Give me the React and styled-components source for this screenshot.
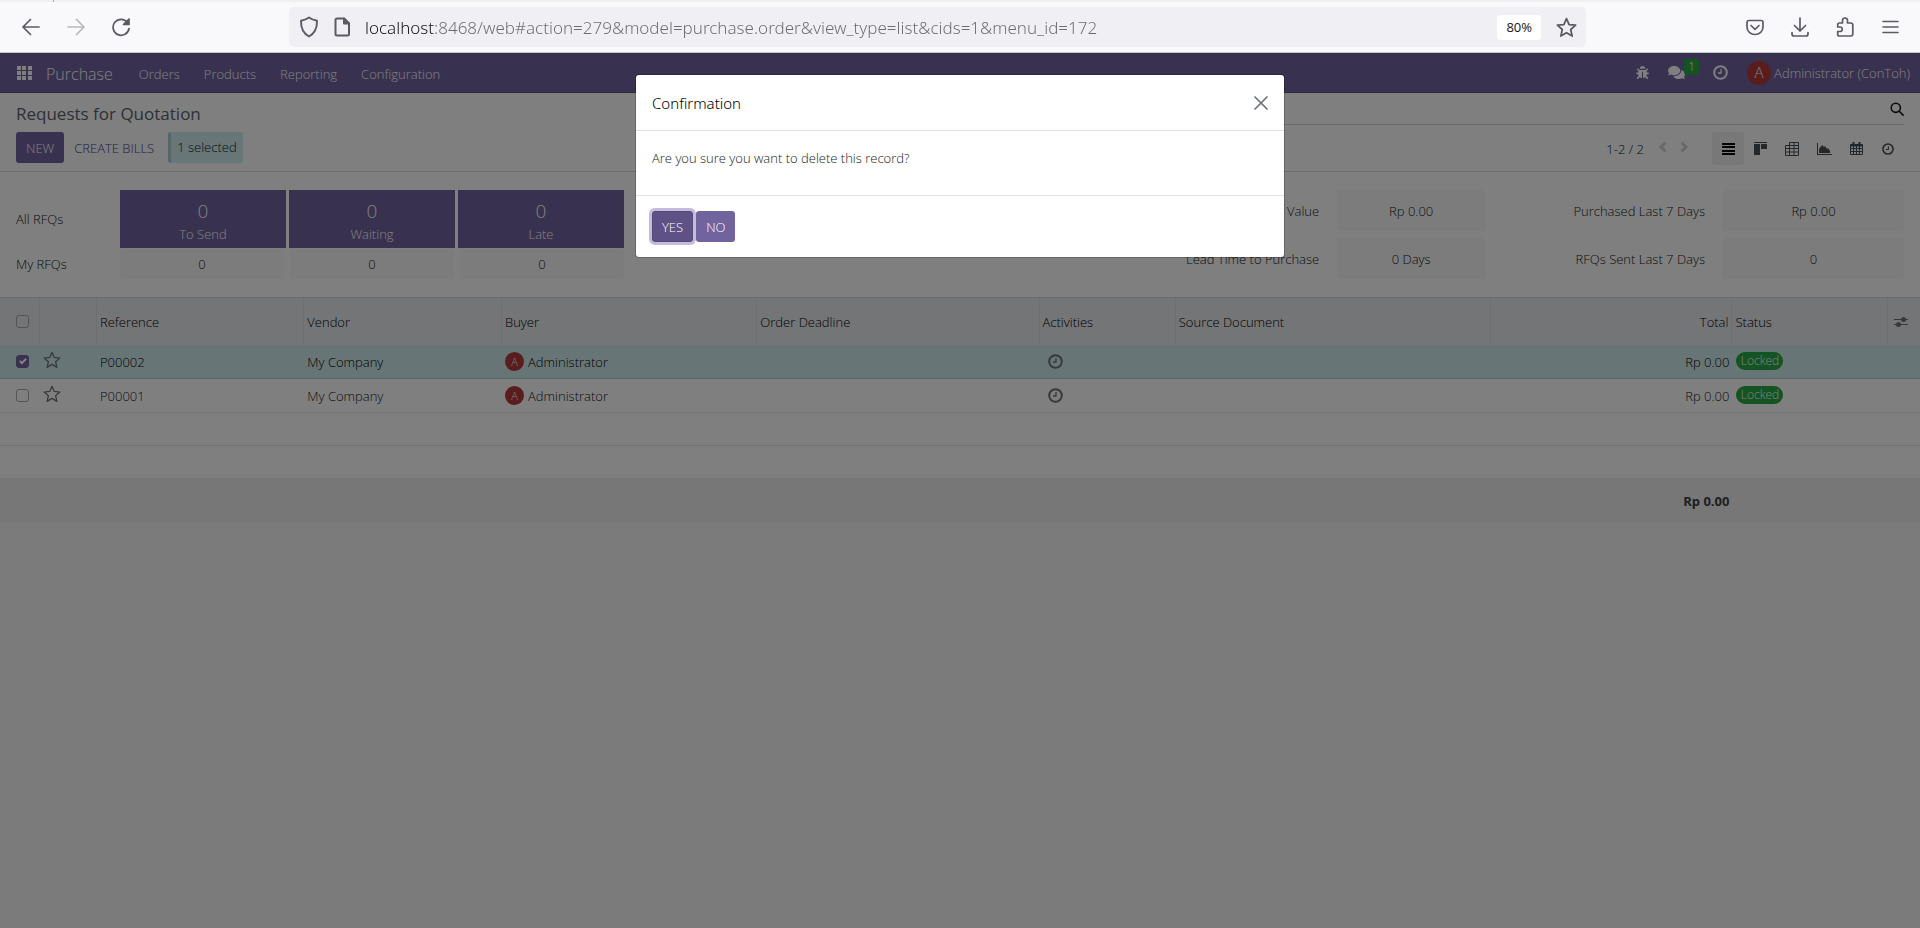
import React from "react";
import styled, { createGlobalStyle, css } from "styled-components";
import { FaBug, FaComments } from "react-icons/fa";

const GlobalStyle = createGlobalStyle`
  *, *::before, *::after { box-sizing: border-box; }
  body {
    margin: 0;
    color: #15181c;
    background: #f7f7f7;
    font: 300 13px/20px "Open Sans", "Noto Sans", sans-serif;
  }
  button, input { font: inherit; color: inherit; }
  button { border: 0; padding: 0; background: none; cursor: pointer; }
  svg { display: block; flex: none; }
`;

const Window = styled.div`
  display: flex;
  flex-direction: column;
  min-height: 100vh;
`;

/* ---------- browser chrome ---------- */

const TabStrip = styled.div`
  height: 2px;
  background: #f0f0f2;
`;

const TabEdge = styled.div`
  width: 54px;
  height: 2px;
  border-right: 1px solid #a9a9ad;
`;

const BrowserBar = styled.header`
  display: flex;
  align-items: center;
  height: 51px;
  padding: 0 8px;
  background: #f9f9fb;
  border-bottom: 1px solid #c3cbc6;
  color: #5b5b66;
`;

const ChromeButton = styled.button`
  display: flex;
  align-items: center;
  justify-content: center;
  width: 45px;
  height: 32px;
  opacity: ${(p) => (p.disabled ? 0.4 : 1)};
`;

const UrlBar = styled.div`
  display: flex;
  flex: 1;
  align-items: center;
  height: 40px;
  margin: 0 146px;
  padding: 0 9px 0 10px;
  gap: 15px;
  border-radius: 5px;
  background: #f0f0f4;
`;

const UrlInput = styled.input`
  flex: 1;
  min-width: 0;
  height: 32px;
  padding: 1px 0 0;
  border: 0;
  outline: 0;
  font-family: "Noto Sans", sans-serif;
  font-size: 17px;
  color: transparent;
  background: linear-gradient(90deg, #15141a 70px, #6b6b71 70px);
  background-clip: text;
  -webkit-background-clip: text;
`;

const ZoomLevel = styled.button`
  height: 25px;
  padding: 0 9px;
  border-radius: 4px;
  background: #fff;
  color: #15141a;
  font-weight: 400;
`;

/* ---------- application ---------- */

const Page = styled.div`
  position: relative;
  flex: 1;
`;

const Navbar = styled.nav`
  display: flex;
  align-items: center;
  height: 40px;
  padding: 0 10px 0 17px;
  background: #71639e;
  border-bottom: 1px solid #5a4f7f;
  color: #fff;
`;

const Brand = styled.a`
  padding: 2px 14px 0;
  font-size: 16px;
  color: inherit;
  text-decoration: none;
`;

const NavLink = styled.a`
  padding: 2px 12px 0;
  color: inherit;
  text-decoration: none;
`;

const Systray = styled.div`
  display: flex;
  align-items: center;
  margin-left: auto;
`;

const TrayButton = styled.button`
  position: relative;
  display: flex;
  align-items: center;
  margin-right: ${(p) => (p.$counted ? 28 : 19)}px;
`;

const Counter = styled.span`
  position: absolute;
  left: 16px;
  top: -5px;
  width: 15px;
  height: 16px;
  border-radius: 3px;
  background: #28a745;
  font-size: 12px;
  line-height: 16px;
  text-align: center;
`;

const Avatar = styled.span`
  display: flex;
  align-items: center;
  justify-content: center;
  flex: none;
  width: ${(p) => (p.$large ? 24 : 19)}px;
  height: ${(p) => (p.$large ? 24 : 19)}px;
  border-radius: 50%;
  background: #b33a3c;
  color: #fff;
  font-size: ${(p) => (p.$large ? 15 : 11)}px;
  line-height: 1;
`;

const UserButton = styled.button`
  display: flex;
  align-items: center;
  gap: 3px;
`;

const ControlPanel = styled.section`
  display: grid;
  grid-template-columns: 1fr 1fr;
  padding: 0 16px 6px;
  background: #fff;
  border-bottom: 1px solid #d9dbde;
`;

const Title = styled.h1`
  margin: 9px 0 6px;
  color: #5c6269;
  font-size: 17px;
  font-weight: 400;
  line-height: 24px;
`;

const Actions = styled.div`
  display: flex;
  align-items: center;
`;

const Button = styled.button`
  height: 31px;
  padding: 0 10px;
  border-radius: 3px;
  text-transform: uppercase;
  ${(p) =>
    p.$link
      ? css`
          color: #46378a;
        `
      : css`
          background: ${p.$active ? "#5e5185" : "#71639e"};
          color: #fff;
        `}
  ${(p) =>
    p.$active &&
    css`
      border: 1px solid #564a79;
      padding: 0 9px;
      box-shadow: 0 0 0 3px #c4bcd9;
      outline: 0;
    `}
`;

const Selected = styled.span`
  height: 31px;
  margin-left: 4px;
  padding: 0 6px;
  border-left: 3px solid #a6cfd4;
  border-radius: 3px;
  background: #d1ecee;
  color: #002a33;
  line-height: 31px;
`;

const SearchRow = styled.div`
  display: flex;
  align-items: center;
  height: 32px;
  border-bottom: 1px solid #d3d5d8;
`;

const SearchInput = styled.input`
  flex: 1;
  min-width: 0;
  border: 0;
  outline: 0;
  background: none;
`;

const ViewRow = styled.div`
  display: flex;
  align-items: center;
  justify-content: flex-end;
  margin-top: 7px;
`;

const PagerButton = styled.button`
  width: 21px;
  color: #d0d3d7;
  svg { margin: 0 auto 4px; }
`;

const Pager = styled.div`
  display: flex;
  align-items: center;
  margin-right: 18px;
  span { margin-right: 8px; }
`;

const ViewButton = styled.button`
  display: flex;
  align-items: center;
  justify-content: center;
  width: 32px;
  height: 33px;
  border-radius: 3px;
  color: ${(p) => (p.$on ? "#000" : "#495057")};
  background: ${(p) => (p.$on ? "#f1f1f2" : "none")};
`;

const Dashboard = styled.section`
  display: flex;
  justify-content: space-between;
  padding: 18px 16px;
  background: #fff;
`;

const Summary = styled.div`
  display: grid;
  flex: 0 1 608px;
  gap: 1px;
`;

const SummaryRow = styled.div`
  display: flex;
  align-items: center;
`;

const SummaryLabel = styled.span`
  flex: 0 0 104px;
`;

const SummaryCells = styled.div`
  display: grid;
  flex: 1;
  grid-template-columns: repeat(3, 1fr);
  gap: ${(p) => p.$gap}px;
`;

const Tile = styled.a`
  display: flex;
  flex-direction: column;
  align-items: center;
  height: 58px;
  padding-top: 8px;
  background: #71639e;
  color: #fff;
  text-decoration: none;
  strong { font-size: 19px; font-weight: 300; line-height: 26px; }
`;

const Figure = styled.a`
  display: flex;
  align-items: center;
  justify-content: center;
  height: ${(p) => (p.$tall ? 41 : 30)}px;
  border-radius: 3px;
  background: #f8f8f8;
  color: inherit;
  text-decoration: none;
`;

const Metrics = styled.div`
  display: grid;
  flex: 0 1 718px;
  grid-template-columns: auto 148px 1fr 181px;
  gap: 7px 18px;
  align-items: center;
  text-align: right;
`;

const List = styled.table`
  width: 100%;
  table-layout: fixed;
  border-spacing: 0;
  background: #fff;
  th { font-weight: 300; text-align: left; color: #000; }
  td, th { padding: 0 3px; white-space: nowrap; }
  td:first-child, th:first-child { padding-left: 16px; }
  td { border-bottom: 1px solid #e4e6e9; }
`;

const Col = styled.col`
  width: ${(p) => p.$w};
`;

const HeadCell = styled.th`
  height: 48px;
  border-top: 1px solid #d9dbde;
  border-right: 1px solid #dddfe2;
  background: #e9eaec;
  && { text-align: ${(p) => (p.$right ? "right" : "left")}; }
  &:last-child { border-right: 0; padding-left: 6px; }
`;

const Row = styled.tr`
  height: ${(p) => (p.$empty ? 33 : 34)}px;
  ${(p) =>
    p.$selected &&
    css`
      background: #d1ebec;
      color: #000;
      && td { border-bottom-color: #b9cfd1; }
    `}
`;

const FootRow = styled.tr`
  height: 44px;
  background: #eeeeee;
  color: #3a3f46;
  td { border: 0; font-weight: 700; }
`;

const NumberCell = styled.td`
  text-align: right;
`;

const Person = styled.span`
  display: flex;
  align-items: center;
  gap: 4px;
`;

const Check = styled.input.attrs({ type: "checkbox" })`
  display: block;
  appearance: none;
  width: 13px;
  height: 13px;
  margin: 0;
  border: 1px solid #a5a8ac;
  border-radius: 3px;
  &:checked { background: #71639e; border-color: #71639e; }
  &:checked::after {
    content: "";
    display: block;
    width: 4px;
    height: 7px;
    margin: 1px 0 0 4px;
    border: solid #fff;
    border-width: 0 2px 2px 0;
    transform: rotate(45deg);
  }
`;

const IconButton = styled.button`
  display: block;
  color: #6c7178;
`;

const StarButton = styled(IconButton)`
  margin-bottom: 3px;
`;

const ActivityButton = styled(IconButton)`
  margin-left: 5px;
`;

const Badge = styled.span`
  display: block;
  width: 47px;
  height: 18px;
  margin: 0 1px 2px;
  border-radius: 9px;
  background: #28a745;
  color: #fff;
  font-size: 12px;
  line-height: 18px;
  text-align: center;
`;

/* ---------- dialog ---------- */

const Backdrop = styled.div`
  position: absolute;
  inset: 0;
  display: flex;
  justify-content: center;
  align-items: flex-start;
  padding-top: 22px;
  background: rgba(0, 0, 0, 0.5);
`;

const Dialog = styled.section`
  width: 648px;
  max-width: 90%;
  border-radius: 3px;
  background: #fff;
  box-shadow: 0 0 0 1px rgba(0, 0, 0, 0.2);
`;

const DialogHeader = styled.header`
  display: flex;
  align-items: center;
  justify-content: space-between;
  height: 56px;
  padding: 0 16px;
  border-bottom: 1px solid #dee2e6;
  color: #000;
`;

const DialogTitle = styled.h2`
  margin: 0;
  font-family: "Noto Sans", sans-serif;
  font-size: 15px;
  font-weight: 300;
`;

const DialogBody = styled.p`
  margin: 0;
  padding: 17px 16px 27px;
`;

const DialogFooter = styled.footer`
  display: flex;
  gap: 3px;
  padding: 15px 16px;
  border-top: 1px solid #dee2e6;
`;

/* ---------- drawings ---------- */

const Line = ({ w, h, box, sw = 2, children }) => (
  <svg width={w} height={h} viewBox={box || `0 0 ${w} ${h}`} fill="none" stroke="currentColor"
    strokeWidth={sw} strokeLinecap="round" strokeLinejoin="round" aria-hidden="true">
    {children}
  </svg>
);

const Fill = ({ w, h, children }) => (
  <svg width={w} height={h} viewBox={`0 0 ${w} ${h}`} fill="currentColor" aria-hidden="true">
    {children}
  </svg>
);

const Back = () => <Line w={18} h={18} sw={1.7}><path d="M17 9H1.5M8.5 1.5 1 9l7.5 7.5" /></Line>;
const Forward = () => <Line w={18} h={18} sw={1.7}><path d="M1 9h15.500M9.500 1.500 17 9l-7.500 7.500" /></Line>;
const Reload = () => (
  <Line w={20} h={20} sw={1.7}>
    <path d="M16.500 5.500A8 8 0 1 0 18 11.500" />
    <path d="M18 2v5.500h-5.500z" fill="currentColor" />
  </Line>
);
const Shield = () => <Line w={20} h={22} sw={1.9}><path d="M10 1.500c2.500 1.800 5 2.800 8 3.300.200 7-2 12.500-8 15.700C4 17.300 1.800 11.800 2 4.800c3-.500 5.500-1.500 8-3.300z" /></Line>;
const Doc = () => (
  <Line w={16} h={20} sw={2}>
    <path d="M3 1.500h7l5 5V17a1.500 1.500 0 0 1-1.500 1.500H3A1.500 1.500 0 0 1 1.500 17V3A1.500 1.500 0 0 1 3 1.500z" />
    <path d="M10 1.500v5h5z" fill="currentColor" />
  </Line>
);
const Star = ({ size, sw }) => (
  <Line w={size} h={size} box="0 0 20 20" sw={sw}>
    <path d="m10 1.500 2.500 5.700 6.200.6-4.700 4.100 1.400 6.300-5.400-3.300-5.400 3.300L6 11.900 1.300 7.800l6.200-.6z" />
  </Line>
);
const Pocket = () => <Line w={18} h={17} sw={1.700}><path d="M3 1.500h12A1.800 1.800 0 0 1 17 3.300V8A8 7.500 0 0 1 1 8V3.300A1.800 1.800 0 0 1 3 1.500zM5 6.500l4 3.800 4-3.800" /></Line>;
const Download = () => <Line w={18} h={20} sw={1.700}><path d="M9 1v13M3.500 8.500 9 14l5.500-5.500M1 15.500v1.500a2 2 0 0 0 2 2h12a2 2 0 0 0 2-2v-1.500" /></Line>;
const Puzzle = () => <Line w={18} h={20} sw={1.700}><path d="M6.500 6V3.500a2.500 2.500 0 0 1 5 0V6H15a1.800 1.800 0 0 1 1.800 1.800v9.400A1.800 1.800 0 0 1 15 19H3.500a1.800 1.800 0 0 1-1.800-1.800V14.500H4a2.200 2.200 0 0 0 0-4.500H1.700V7.800A1.800 1.800 0 0 1 3.500 6z" /></Line>;
const Burger = () => <Line w={18} h={14} sw={1.600}><path d="M2 1.500h15M2 7h15M2 12.500h15" /></Line>;
const Apps = () => (
  <Fill w={15} h={14}>
    {[0, 5, 10].flatMap((y) => [0, 5, 11].map((x) => <rect key={`${x}-${y}`} x={x} y={y} width="4" height="4" />))}
  </Fill>
);
const Clock = ({ size = 15 }) => (
  <svg width={size} height={size} viewBox="0 0 15 15" fill="none" stroke="currentColor" aria-hidden="true">
    <circle cx="7.500" cy="7.500" r="6.300" strokeWidth="2" />
    <path d="M8 4v4H5" strokeWidth="1.300" />
  </svg>
);
const Magnifier = () => <Line w={14} h={14} sw={1.600}><circle cx="5.800" cy="5.800" r="4.600" /><path d="m9.300 9.300 3.800 3.800" /></Line>;
const Chevron = ({ right }) => <Line w={10} h={12} sw={3}><path d={right ? "m2.500 1.500 4.500 4.500-4.500 4.500" : "M7.500 1.500 3 6l4.500 4.500"} strokeLinecap="butt" strokeLinejoin="miter" /></Line>;
const ListIcon = () => <Fill w={13} h={12}><path d="M0 0h13v2H0zM0 3h13v2H0zM0 7h13v2H0zM0 10h13v2H0z" /></Fill>;
const Kanban = () => <Fill w={13} h={13}><path d="M0 0h13v1H0zM0 2h6v11H0zM7 2h6v5H7z" /></Fill>;
const Pivot = () => (
  <svg width="14" height="14" viewBox="0 0 14 14" fill="none" stroke="currentColor" aria-hidden="true">
    <path d="M4.500 3.500v-3h9v13H.5v-10h13M.5 6.500h13M.5 10h13M4.500 3.500v10M9 .5v13" />
  </svg>
);
const Graph = () => <Fill w={15} h={12}><path d="M0 0h1v11h14v1H0zM2 10V6l3-4 2 2 1-1 2 3 1-1 2 3v2z" /></Fill>;
const Calendar = () => (
  <svg width="13" height="13" viewBox="0 0 13 13" fill="none" stroke="currentColor" aria-hidden="true">
    <path d="M.5 2.500h12v10H.5zM.5 6.500h12M.5 9.500h12M3.500 4v8.500M6.500 4v8.500M9.500 4v8.500" />
    <path d="M0 3.500h13M3.500 0v4M9.500 0v4" strokeWidth="2" />
  </svg>
);
const Sliders = () => (
  <Fill w={14} h={12}>
    <path d="M0 3h14v1H0zM0 8h14v1H0z" />
    <circle cx="9.500" cy="3.500" r="2.500" />
    <circle cx="4.500" cy="8.500" r="2.500" />
  </Fill>
);
const Close = () => <Line w={14} h={14} sw={1.700}><path d="m1 1 12 12M13 1 1 13" /></Line>;

/* ---------- data ---------- */

const menus = ["Orders", "Products", "Reporting", "Configuration"];
const tiles = ["To Send", "Waiting", "Late"];
const views = [
  ["List", ListIcon], ["Kanban", Kanban], ["Pivot", Pivot],
  ["Graph", Graph], ["Calendar", Calendar], ["Activity", () => <Clock size={12} />],
];
const columns = [
  ["10.8%", "Reference"], ["10.3%", "Vendor"], ["13.3%", "Buyer"], ["14.7%", "Order Deadline"],
  ["7.1%", "Activities"], ["16.4%", "Source Document"], ["12.6%", "Total"], ["8.1%", "Status"],
];
const orders = [
  { ref: "P00002", selected: true },
  { ref: "P00001", selected: false },
];

export default function App() {
  return (
    <Window>
      <GlobalStyle />
      <TabStrip><TabEdge /></TabStrip>
      <BrowserBar>
        <ChromeButton aria-label="Back"><Back /></ChromeButton>
        <ChromeButton aria-label="Forward" disabled><Forward /></ChromeButton>
        <ChromeButton aria-label="Reload"><Reload /></ChromeButton>
        <UrlBar>
          <Shield />
          <Doc />
          <UrlInput
            aria-label="Address"
            defaultValue="localhost:8468/web#action=279&model=purchase.order&view_type=list&cids=1&menu_id=172"
          />
          <ZoomLevel>80%</ZoomLevel>
          <Star size={21} sw={1.7} />
        </UrlBar>
        <ChromeButton aria-label="Pocket"><Pocket /></ChromeButton>
        <ChromeButton aria-label="Downloads"><Download /></ChromeButton>
        <ChromeButton aria-label="Extensions"><Puzzle /></ChromeButton>
        <ChromeButton aria-label="Menu"><Burger /></ChromeButton>
      </BrowserBar>

      <Page>
        <Navbar>
          <Apps />
          <Brand href="#purchase">Purchase</Brand>
          {menus.map((m) => <NavLink key={m} href={`#${m}`}>{m}</NavLink>)}
          <Systray>
            <TrayButton aria-label="Debug"><FaBug size={13} /></TrayButton>
            <TrayButton aria-label="Messages" $counted>
              <FaComments size={17} />
              <Counter>1</Counter>
            </TrayButton>
            <TrayButton aria-label="Activities"><Clock /></TrayButton>
            <UserButton><Avatar $large>A</Avatar>Administrator (ConToh)</UserButton>
          </Systray>
        </Navbar>

        <ControlPanel>
          <div>
            <Title>Requests for Quotation</Title>
            <Actions>
              <Button>New</Button>
              <Button $link>Create Bills</Button>
              <Selected>1 selected</Selected>
            </Actions>
          </div>
          <div>
            <SearchRow>
              <SearchInput aria-label="Search" />
              <Magnifier />
            </SearchRow>
            <ViewRow>
              <Pager>
                <span>1-2 / 2</span>
                <PagerButton aria-label="Previous"><Chevron /></PagerButton>
                <PagerButton aria-label="Next"><Chevron right /></PagerButton>
              </Pager>
              {views.map(([name, Icon], i) => (
                <ViewButton key={name} aria-label={name} $on={i === 0}><Icon /></ViewButton>
              ))}
            </ViewRow>
          </div>
        </ControlPanel>

        <Dashboard>
          <Summary>
            <SummaryRow>
              <SummaryLabel>All RFQs</SummaryLabel>
              <SummaryCells $gap={3}>
                {tiles.map((t) => <Tile key={t} href="#all"><strong>0</strong>{t}</Tile>)}
              </SummaryCells>
            </SummaryRow>
            <SummaryRow>
              <SummaryLabel>My RFQs</SummaryLabel>
              <SummaryCells $gap={6}>
                {tiles.map((t) => <Figure key={t} href="#my">0</Figure>)}
              </SummaryCells>
            </SummaryRow>
          </Summary>
          <Metrics>
            <span>Avg Order Value</span><Figure as="span" $tall>Rp 0.00</Figure>
            <span>Purchased Last 7 Days</span><Figure as="span" $tall>Rp 0.00</Figure>
            <span>Lead Time to Purchase</span><Figure as="span" $tall>0 Days</Figure>
            <span>RFQs Sent Last 7 Days</span><Figure as="span" $tall>0</Figure>
          </Metrics>
        </Dashboard>

        <List>
          <colgroup>
            <Col $w="40px" />
            <Col $w="57px" />
            {columns.map(([w, name]) => <Col key={name} $w={w} />)}
            <Col $w="32px" />
          </colgroup>
          <thead>
            <tr>
              <HeadCell><Check aria-label="Select all" /></HeadCell>
              <HeadCell />
              {columns.map(([, name]) => <HeadCell key={name} $right={name === "Total"}>{name}</HeadCell>)}
              <HeadCell><IconButton aria-label="Optional columns"><Sliders /></IconButton></HeadCell>
            </tr>
          </thead>
          <tbody>
            {orders.map((o) => (
              <Row key={o.ref} $selected={o.selected}>
                <td><Check aria-label={`Select ${o.ref}`} defaultChecked={o.selected} /></td>
                <td><StarButton aria-label="Priority"><Star size={18} sw={1.4} /></StarButton></td>
                <td>{o.ref}</td>
                <td>My Company</td>
                <td><Person><Avatar>A</Avatar>Administrator</Person></td>
                <td />
                <td><ActivityButton aria-label="Schedule activity"><Clock /></ActivityButton></td>
                <td />
                <NumberCell>Rp 0.00</NumberCell>
                <td><Badge>Locked</Badge></td>
                <td />
              </Row>
            ))}
            <Row $empty><td colSpan={11} /></Row>
            <Row $empty><td colSpan={11} /></Row>
          </tbody>
          <tfoot>
            <FootRow>
              <td colSpan={8} />
              <NumberCell>Rp 0.00</NumberCell>
              <td colSpan={2} />
            </FootRow>
          </tfoot>
        </List>

        <Backdrop>
          <Dialog role="dialog" aria-modal="true" aria-labelledby="dialog-title">
            <DialogHeader>
              <DialogTitle id="dialog-title">Confirmation</DialogTitle>
              <IconButton aria-label="Close"><Close /></IconButton>
            </DialogHeader>
            <DialogBody>Are you sure you want to delete this record?</DialogBody>
            <DialogFooter>
              <Button $active>Yes</Button>
              <Button>No</Button>
            </DialogFooter>
          </Dialog>
        </Backdrop>
      </Page>
    </Window>
  );
}
